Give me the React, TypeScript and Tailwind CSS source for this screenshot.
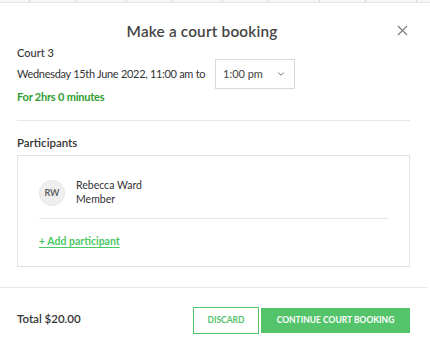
import { X, ChevronDown } from 'lucide-react';

const gridCols = [30, 46, 51, 46, 50, 46, 51, 46, 51];

function TopStrip() {
  return (
    <div className="flex h-[3px] border-b border-[#e6e6e6] bg-[#f7f7f7]">
      {gridCols.map((w, i) => (
        <div key={i} className="h-full border-r border-[#d6d6d6]" style={{ width: w }} />
      ))}
    </div>
  );
}

export default function App() {
  return (
    <div
      className="w-[430px] h-[355px] bg-white text-[#333] overflow-hidden"
      style={{ fontFamily: 'Lato, "Open Sans", sans-serif' }}
    >
      <TopStrip />

      {/* Header */}
      <div className="relative flex items-center justify-center h-[54px] pt-[3px] pr-[26px]">
        <h1 className="text-[15.3px] font-semibold text-[#444] tracking-[0.2px]">Make a court booking</h1>
        <button className="absolute right-[19px] top-[19px] text-[#777]">
          <X size={17} strokeWidth={1.5} />
        </button>
      </div>

      {/* Booking details */}
      <div className="pl-[17px] pr-[20px]">
        <div className="text-[11px] font-medium leading-none mt-[-10px]">Court 3</div>
        <div className="flex items-center mt-[1px]">
          <span className="text-[11px] w-[198px] whitespace-nowrap tracking-[-0.3px]">
            Wednesday 15th June 2022, 11:00 am to
          </span>
          <div className="flex items-center justify-between w-[80px] h-[30px] border border-[#d9d9d9] pl-[7px] pr-[8px]">
            <span className="text-[11px] text-[#444]">1:00 pm</span>
            <ChevronDown size={10} strokeWidth={2} className="text-[#555]" />
          </div>
        </div>
        <div className="text-[11px] font-bold text-[#2f9e2f] tracking-[-0.2px]">For 2hrs 0 minutes</div>

        <div className="h-px bg-[#e8e8e8] mt-[14px]" />

        <div className="text-[11.5px] font-semibold text-[#333] mt-[13px]">Participants</div>

        {/* Participants box */}
        <div className="mt-[4px] border border-[#e3e3e3] h-[112px] px-[21px] pt-[24px]">
          <div className="flex items-center gap-[11px]">
            <div className="w-[26px] h-[26px] rounded-full bg-[#efefef] border border-[#e6e6e6] flex items-center justify-center text-[9px] font-semibold text-[#555]">
              RW
            </div>
            <div className="leading-[14px] -mt-[2px]">
              <div className="text-[10.5px] text-[#333]">Rebecca Ward</div>
              <div className="text-[10.5px] text-[#333]">Member</div>
            </div>
          </div>
          <div className="h-px bg-[#e5e5e5] mt-[12px]" />
          <a href="#" className="inline-block mt-[15px] text-[10.5px] font-bold text-[#4cc866] underline underline-offset-2">
            + Add participant
          </a>
        </div>
      </div>

      {/* Footer */}
      <div className="h-px bg-[#e8e8e8] mt-[20px] mr-[3px]" />
      <div className="flex items-center justify-between pl-[17px] pr-[20px] h-[64px]">
        <span className="text-[11.5px] font-semibold text-[#333] -mt-[3px]">Total $20.00</span>
        <div className="flex items-center gap-[2px] mt-[1px]">
          <button className="w-[66px] h-[27px] border border-[#52c46a] text-[#52c46a] text-[8.5px] font-bold">
            DISCARD
          </button>
          <button className="w-[149px] h-[25px] bg-[#54c46b] text-white text-[8.5px] font-bold">
            CONTINUE COURT BOOKING
          </button>
        </div>
      </div>
    </div>
  );
}
